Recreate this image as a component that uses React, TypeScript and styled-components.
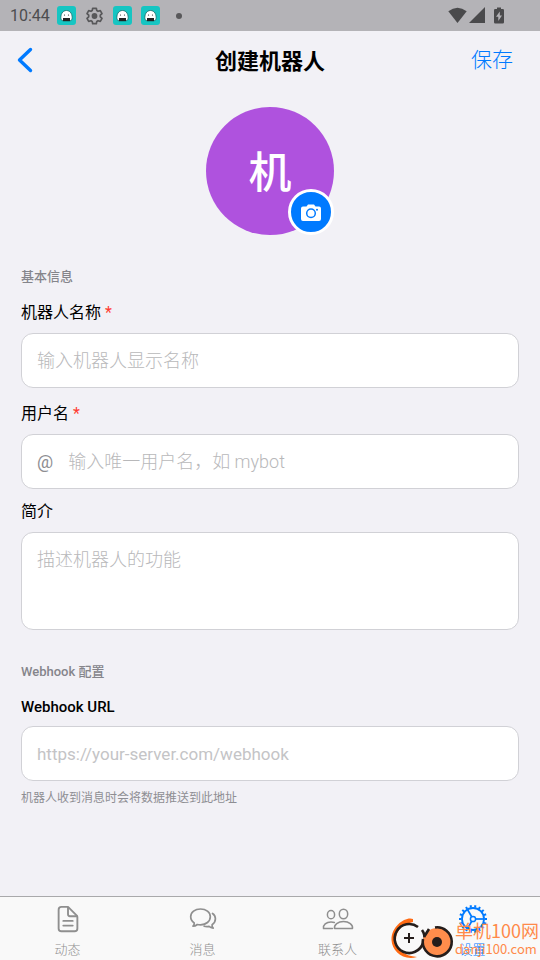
import React from "react";
import styled, { createGlobalStyle } from "styled-components";
import { IoDocumentTextOutline } from "react-icons/io5";

const GlobalStyle = createGlobalStyle`
  *, *::before, *::after { box-sizing: border-box; }
  body {
    margin: 0;
    background: #f2f1f6;
    color: #000;
    font-family: Roboto, "Noto Sans CJK SC", sans-serif;
  }
  button, input, textarea { font: inherit; }
`;

const Page = styled.div`
  min-height: 100vh;
  display: flex;
  flex-direction: column;
`;

const StatusBar = styled.div`
  height: 31px;
  padding: 0 34px 0 10px;
  display: flex;
  align-items: center;
  justify-content: space-between;
  background: #b4b3b7;
  color: #4d4d4f;
`;

const StatusGroup = styled.div`
  display: flex;
  align-items: center;
  gap: 9px;
`;

const Clock = styled.span`
  font-size: 16px;
  line-height: 20px;
  margin-right: -2px;
`;

const Dot = styled.span`
  width: 6px;
  height: 6px;
  margin-left: 7px;
  border-radius: 50%;
  background: #58585a;
`;

const Header = styled.header`
  height: 60px;
  padding: 0 27px 2px 16px;
  display: grid;
  grid-template-columns: 1fr auto 1fr;
  align-items: center;
`;

const PlainButton = styled.button`
  padding: 0;
  border: 0;
  background: none;
  color: #007aff;
  cursor: pointer;
`;

const BackButton = styled(PlainButton)`
  justify-self: start;
  display: flex;
`;

const SaveButton = styled(PlainButton)`
  justify-self: end;
  font-size: 21px;
  line-height: 30px;
  font-weight: 300;
`;

const Title = styled.h1`
  margin: 0;
  padding: 4px 0 0 11px;
  font-size: 22px;
  line-height: 30px;
  font-weight: 700;
`;

const Form = styled.form`
  flex: 1;
  padding: 16px 21px 20px;
  display: flex;
  flex-direction: column;
`;

const Avatar = styled.div`
  position: relative;
  align-self: center;
  width: 128px;
  height: 128px;
  margin-bottom: 32px;
  padding-top: 4px;
  display: flex;
  align-items: center;
  justify-content: center;
  border-radius: 50%;
  background: #af52de;
  color: #fff;
  font-size: 43px;
  line-height: 60px;
  font-weight: 500;
`;

const CameraButton = styled.button`
  position: absolute;
  right: 0;
  bottom: 0;
  width: 46px;
  height: 46px;
  padding: 0;
  display: flex;
  align-items: center;
  justify-content: center;
  border: 3px solid #fff;
  border-radius: 50%;
  background: #007aff;
  color: #fff;
  cursor: pointer;
`;

const SectionTitle = styled.h2`
  margin: 0 0 14px;
  font-size: 13px;
  line-height: 20px;
  font-weight: 500;
  color: #85858b;
`;

const Field = styled.div<{ $gap: number }>`
  display: flex;
  flex-direction: column;
  margin-bottom: ${(p) => p.$gap}px;
`;

const Label = styled.label<{ $latin?: boolean }>`
  margin-bottom: 8px;
  font-size: ${(p) => (p.$latin ? 15 : 16)}px;
  line-height: ${(p) => (p.$latin ? 22 : 24)}px;
  font-weight: ${(p) => (p.$latin ? 500 : 400)};
`;

const Required = styled.span`
  color: #ff3b30;
`;

const InputBox = styled.div<{ $latin?: boolean }>`
  min-height: 55px;
  padding: 0 15px;
  display: flex;
  align-items: center;
  gap: 15px;
  border: 1px solid #d1d1d6;
  border-radius: 12px;
  background: #fff;
  font-size: ${(p) => (p.$latin ? 17 : 18)}px;
  line-height: 26px;
`;

const Prefix = styled.span`
  color: #8e8e93;
`;

const TextInput = styled.input<{ $latin?: boolean }>`
  flex: 1;
  min-width: 0;
  height: 28px;
  padding: 0;
  border: 0;
  outline: 0;
  background: transparent;
  &::placeholder {
    color: ${(p) => (p.$latin ? "#c4c4c6" : "#b8b8ba")};
    font-weight: ${(p) => (p.$latin ? 400 : 300)};
  }
`;

const TextArea = styled.textarea`
  height: 98px;
  padding: 14px 15px;
  border: 1px solid #d1d1d6;
  border-radius: 12px;
  outline: 0;
  resize: none;
  background: #fff;
  font-size: 18px;
  line-height: 26px;
  &::placeholder { color: #b8b8ba; font-weight: 300; }
`;

const Hint = styled.p`
  margin: 8px 0 0;
  font-size: 12px;
  line-height: 18px;
  color: #8e8e93;
`;

const TabBar = styled.nav`
  position: relative;
  height: 64px;
  display: grid;
  grid-template-columns: repeat(4, 1fr);
  border-top: 1px solid #a9a9ab;
  background: #f9f9f9;
`;

const Tab = styled.a<{ $active?: boolean }>`
  padding-top: 6px;
  display: flex;
  flex-direction: column;
  align-items: center;
  gap: 5px;
  color: ${(p) => (p.$active ? "#007aff" : "#8f8f8f")};
  font-size: 13px;
  line-height: 20px;
  font-weight: 300;
  text-decoration: none;
`;

const TabIcon = styled.span`
  height: 32px;
  display: flex;
  align-items: center;
`;

const Watermark = styled.div`
  position: absolute;
  right: 1px;
  bottom: 0;
  display: flex;
  align-items: center;
  color: #ff8a4a;
  pointer-events: none;
`;

const WatermarkText = styled.div`
  display: flex;
  flex-direction: column;
  font-family: "Noto Sans CJK SC", sans-serif;
  font-size: 18px;
  line-height: 20px;
`;

const WatermarkUrl = styled.span`
  font-size: 13px;
  line-height: 18px;
`;

function AppBadge() {
  return (
    <svg width="19" height="19" viewBox="0 0 19 19" aria-hidden="true">
      <rect width="19" height="19" rx="3" fill="#16c5c2" />
      <path d="M4 13.500c-.8-5 1.500-9 5.500-9s6.300 4 5.500 9l-2 1.500H6z" fill="#fff" stroke="#176b6a" strokeWidth=".8" />
      <rect x="6" y="12" width="7" height="3" fill="#222" />
      <circle cx="7.500" cy="9" r=".6" fill="#222" />
      <circle cx="11.500" cy="9" r=".6" fill="#222" />
    </svg>
  );
}

function StatusGear() {
  return (
    <svg width="19" height="18" viewBox="0 0 18 18" fill="none" stroke="#58585a" aria-hidden="true">
      <path
        d="M7.200 1.300h3.600l.5 2.300 1.200.7 2.300-.7 1.700 3-1.700 1.600v1.600l1.700 1.600-1.700 3-2.300-.7-1.200.7-.5 2.300H7.200l-.5-2.300-1.200-.7-2.300.7-1.700-3 1.700-1.600V8.200L1.500 6.600l1.700-3 2.300.7 1.200-.7z"
        strokeWidth="1.700"
        strokeLinejoin="round"
      />
      <circle cx="9" cy="9" r="2.900" fill="#58585a" stroke="none" />
    </svg>
  );
}

function DeviceStatus() {
  return (
    <svg width="58" height="19" viewBox="0 0 58 19" fill="#4a4a4c" aria-hidden="true">
      <path d="M.3 5.300Q9.500-1.800 18.700 5.300L9.500 17z" />
      <path d="M37 1v16H21z" />
      <path d="M49 1.500h4V3h1.800q1.200 0 1.200 1.200v12q0 1.300-1.300 1.300h-7.400Q46 17.500 46 16.200v-12Q46 3 47.200 3H49z" />
      <path d="M51.800 5.500v4H54L50.300 15v-4.200H48z" fill="#b4b3b7" />
    </svg>
  );
}

function CameraIcon() {
  return (
    <svg width="20" height="17" viewBox="0 0 20 17" aria-hidden="true">
      <path d="M2 2.500h3.500L7 .5h6l1.500 2H18q2 0 2 2V15q0 2-2 2H2q-2 0-2-2V4.500q0-2 2-2z" fill="#fff" />
      <circle cx="10" cy="9.300" r="4.300" fill="none" stroke="#007aff" strokeWidth="1.500" />
      <circle cx="16" cy="5.700" r="1" fill="#007aff" />
    </svg>
  );
}

function ChatIcon() {
  return (
    <svg width="28" height="24" viewBox="0 0 28 24" fill="none" stroke="currentColor" strokeWidth="1.700" strokeLinecap="round" strokeLinejoin="round" aria-hidden="true">
      <path d="M11.500 2C6 2 1.700 5.300 1.700 9.700c0 2.700 1.300 4.700 3.500 6.200.3 1.500-.4 2.600-1.200 3.300 1.700 0 3.200-.8 4.300-1.700 1 .2 2 .3 3.200.3 5.500 0 9.800-3.500 9.800-8.100S17 2 11.500 2z" />
      <path d="M23.500 6.500c2 1.200 2.900 3 2.900 5.300 0 2.500-1.300 4.500-3.300 5.900-.3 1.500.3 2.600 1.100 3.400-1.700-.1-3.200-.8-4.200-1.700-1.500.3-3.200.3-4.800-.2" />
    </svg>
  );
}

function PeopleIcon() {
  return (
    <svg width="32" height="24" viewBox="0 0 32 24" fill="none" stroke="currentColor" strokeWidth="1.500" strokeLinecap="round" strokeLinejoin="round" aria-hidden="true">
      <ellipse cx="21.500" cy="7" rx="4.200" ry="4.800" />
      <path d="M12.500 21.500c-.6-3.900 3.500-7 9-7s9.600 3.100 9 7z" />
      <ellipse cx="9" cy="7.700" rx="3.600" ry="4.100" />
      <path d="M10.500 21.500h-9c-.7-3.700 2.800-6.600 7.500-6.600 1.300 0 2.400.2 3.400.6" />
    </svg>
  );
}

const COG_TEETH = Array.from({ length: 18 }, (_, i) => i * 20);

function CogIcon() {
  return (
    <svg width="30" height="30" viewBox="-15 -15 30 30" fill="none" stroke="currentColor" aria-hidden="true">
      <circle r="11" strokeWidth="1.800" />
      {COG_TEETH.map((angle) => (
        <path key={angle} d="M11.500 0H14" strokeWidth="2" transform={`rotate(${angle})`} />
      ))}
      <circle r="2.600" strokeWidth="1.500" />
      {[0, 120, 240].map((angle) => (
        <path key={angle} d="M2.600 0H11" strokeWidth="1.700" transform={`rotate(${angle})`} />
      ))}
    </svg>
  );
}

function WatermarkLogo() {
  return (
    <svg width="64" height="43" viewBox="0 0 64 43" fill="none" aria-hidden="true">
      <path d="M22 2C15-1 0 9 .5 23 1 34 12 44 26 40C13 39 5 32 5 23 5 13 12 7 22 5z" fill="#ff6a13" />
      <path d="M27 10A14.500 14.500 0 1 0 32 26" stroke="#251d1b" strokeWidth="2.600" />
      <path d="M13 21h10M18 16v10" stroke="#251d1b" strokeWidth="2" />
      <path d="M31 13q3 4 3 12" stroke="#251d1b" strokeWidth="2.600" />
      <circle cx="46" cy="25" r="14" fill="#ff8d4c" />
      <path d="M38 12l-5 8M44 10.500A14.500 14.500 0 1 1 32 22" stroke="#251d1b" strokeWidth="2.600" />
      <circle cx="46" cy="25" r="5" fill="#251d1b" />
    </svg>
  );
}

export default function App() {
  return (
    <Page>
      <GlobalStyle />
      <StatusBar>
        <StatusGroup>
          <Clock>10:44</Clock>
          <AppBadge />
          <StatusGear />
          <AppBadge />
          <AppBadge />
          <Dot />
        </StatusGroup>
        <DeviceStatus />
      </StatusBar>

      <Header>
        <BackButton type="button" aria-label="返回">
          <svg width="18" height="26" viewBox="0 0 18 26" fill="none" stroke="currentColor" strokeWidth="3.400" strokeLinecap="round" strokeLinejoin="round" aria-hidden="true">
            <path d="M14.500 2.500L3.500 13L14.500 23.500" />
          </svg>
        </BackButton>
        <Title>创建机器人</Title>
        <SaveButton type="submit" form="bot-form">保存</SaveButton>
      </Header>

      <Form id="bot-form" onSubmit={(e) => e.preventDefault()}>
        <Avatar>
          机
          <CameraButton type="button" aria-label="更换头像">
            <CameraIcon />
          </CameraButton>
        </Avatar>

        <SectionTitle>基本信息</SectionTitle>
        <Field $gap={14}>
          <Label htmlFor="name">
            机器人名称 <Required>*</Required>
          </Label>
          <InputBox>
            <TextInput id="name" placeholder="输入机器人显示名称" />
          </InputBox>
        </Field>
        <Field $gap={11}>
          <Label htmlFor="username">
            用户名 <Required>*</Required>
          </Label>
          <InputBox>
            <Prefix>@</Prefix>
            <TextInput id="username" placeholder="输入唯一用户名，如 mybot" />
          </InputBox>
        </Field>
        <Field $gap={32}>
          <Label htmlFor="about">简介</Label>
          <TextArea id="about" placeholder="描述机器人的功能" />
        </Field>

        <SectionTitle>Webhook 配置</SectionTitle>
        <Field $gap={0}>
          <Label htmlFor="webhook" $latin>Webhook URL</Label>
          <InputBox $latin>
            <TextInput id="webhook" $latin placeholder="https://your-server.com/webhook" />
          </InputBox>
          <Hint>机器人收到消息时会将数据推送到此地址</Hint>
        </Field>
      </Form>

      <TabBar>
        <Tab href="#feed">
          <TabIcon><IoDocumentTextOutline size={30} /></TabIcon>
          动态
        </Tab>
        <Tab href="#messages">
          <TabIcon><ChatIcon /></TabIcon>
          消息
        </Tab>
        <Tab href="#contacts">
          <TabIcon><PeopleIcon /></TabIcon>
          联系人
        </Tab>
        <Tab href="#settings" $active>
          <TabIcon><CogIcon /></TabIcon>
          设置
        </Tab>
        <Watermark>
          <WatermarkLogo />
          <WatermarkText>
            单机100网
            <WatermarkUrl>danji100.com</WatermarkUrl>
          </WatermarkText>
        </Watermark>
      </TabBar>
    </Page>
  );
}
